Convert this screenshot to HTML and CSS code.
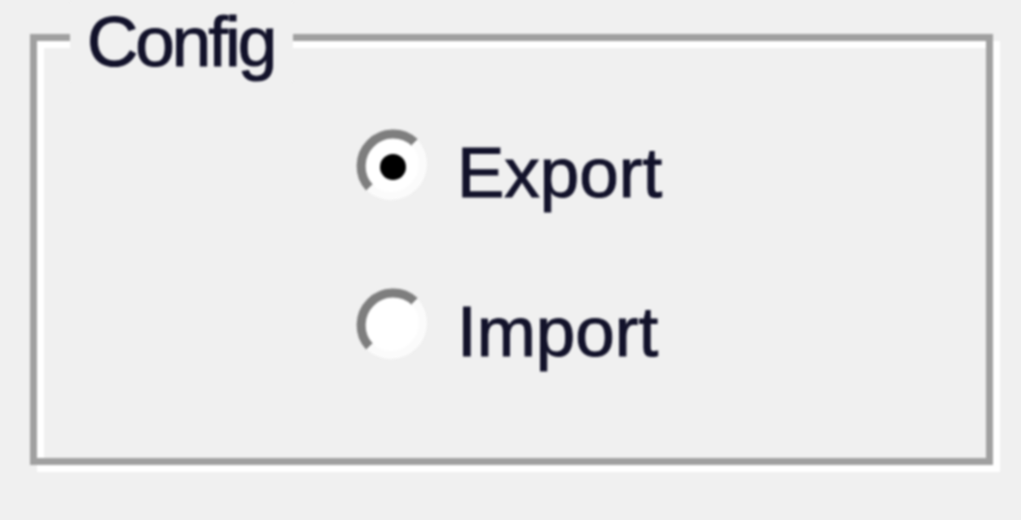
FILE: index.html
```html
<!DOCTYPE html>
<html lang="en">
<head>
<meta charset="utf-8">
<title>Config</title>
<link rel="stylesheet" href="styles.css">
</head>
<body>
<div class="frame">
  <div class="group">
    <span class="legend">Config</span>
    <label class="row">
      <svg class="radio" viewBox="0 0 74 74" width="74" height="74" aria-hidden="true">
        <circle cx="37" cy="37" r="32" fill="#ffffff"/>
        <path d="M59.6 14.4 A32 32 0 0 0 14.4 59.6" fill="none" stroke="#7e7e7e" stroke-width="9"/>
        <path d="M14.4 59.6 A32 32 0 0 0 59.6 14.4" fill="none" stroke="#fbfbfb" stroke-width="8"/>
        <circle cx="38" cy="39" r="13" fill="#000000"/>
      </svg>
      <span class="text">Export</span>
    </label>
    <label class="row">
      <svg class="radio" viewBox="0 0 74 74" width="74" height="74" aria-hidden="true">
        <circle cx="37" cy="37" r="32" fill="#ffffff"/>
        <path d="M59.6 14.4 A32 32 0 0 0 14.4 59.6" fill="none" stroke="#7e7e7e" stroke-width="9"/>
        <path d="M14.4 59.6 A32 32 0 0 0 59.6 14.4" fill="none" stroke="#fbfbfb" stroke-width="8"/>
      </svg>
      <span class="text">Import</span>
    </label>
  </div>
</div>
</body>
</html>
```

FILE: styles.css
```css
html, body {
  margin: 0;
  padding: 0;
  background: #f0f0f0;
}

body {
  width: 1021px;
  height: 520px;
  overflow: hidden;
  font-family: "Liberation Sans", Arial, sans-serif;
  color: #12122a;
}

.frame {
  padding: 34px 0 0 30px;
  filter: blur(1.2px);
}

.group {
  position: relative;
  box-sizing: border-box;
  width: 963px;
  height: 431px;
  border: 7px solid #a0a0a0;
  box-shadow: 7px 7px 0 0 #ffffff, inset 7px 7px 0 0 #ffffff;
  padding: 92px 0 0 318px;
  display: flex;
  flex-direction: column;
  gap: 79px;
}

.legend {
  position: absolute;
  top: -39px;
  left: 33px;
  padding: 0 19px 0 17px;
  background: #f0f0f0;
  font-size: 71px;
  line-height: 80px;
  letter-spacing: -3px;
  -webkit-text-stroke: 1px #12122a;
}

.row {
  display: flex;
  align-items: center;
  gap: 28px;
  height: 80px;
}

.radio {
  flex: none;
  margin-bottom: 16px;
}

.text {
  font-size: 71px;
  line-height: 80px;
  -webkit-text-stroke: 1px #12122a;
}
```
